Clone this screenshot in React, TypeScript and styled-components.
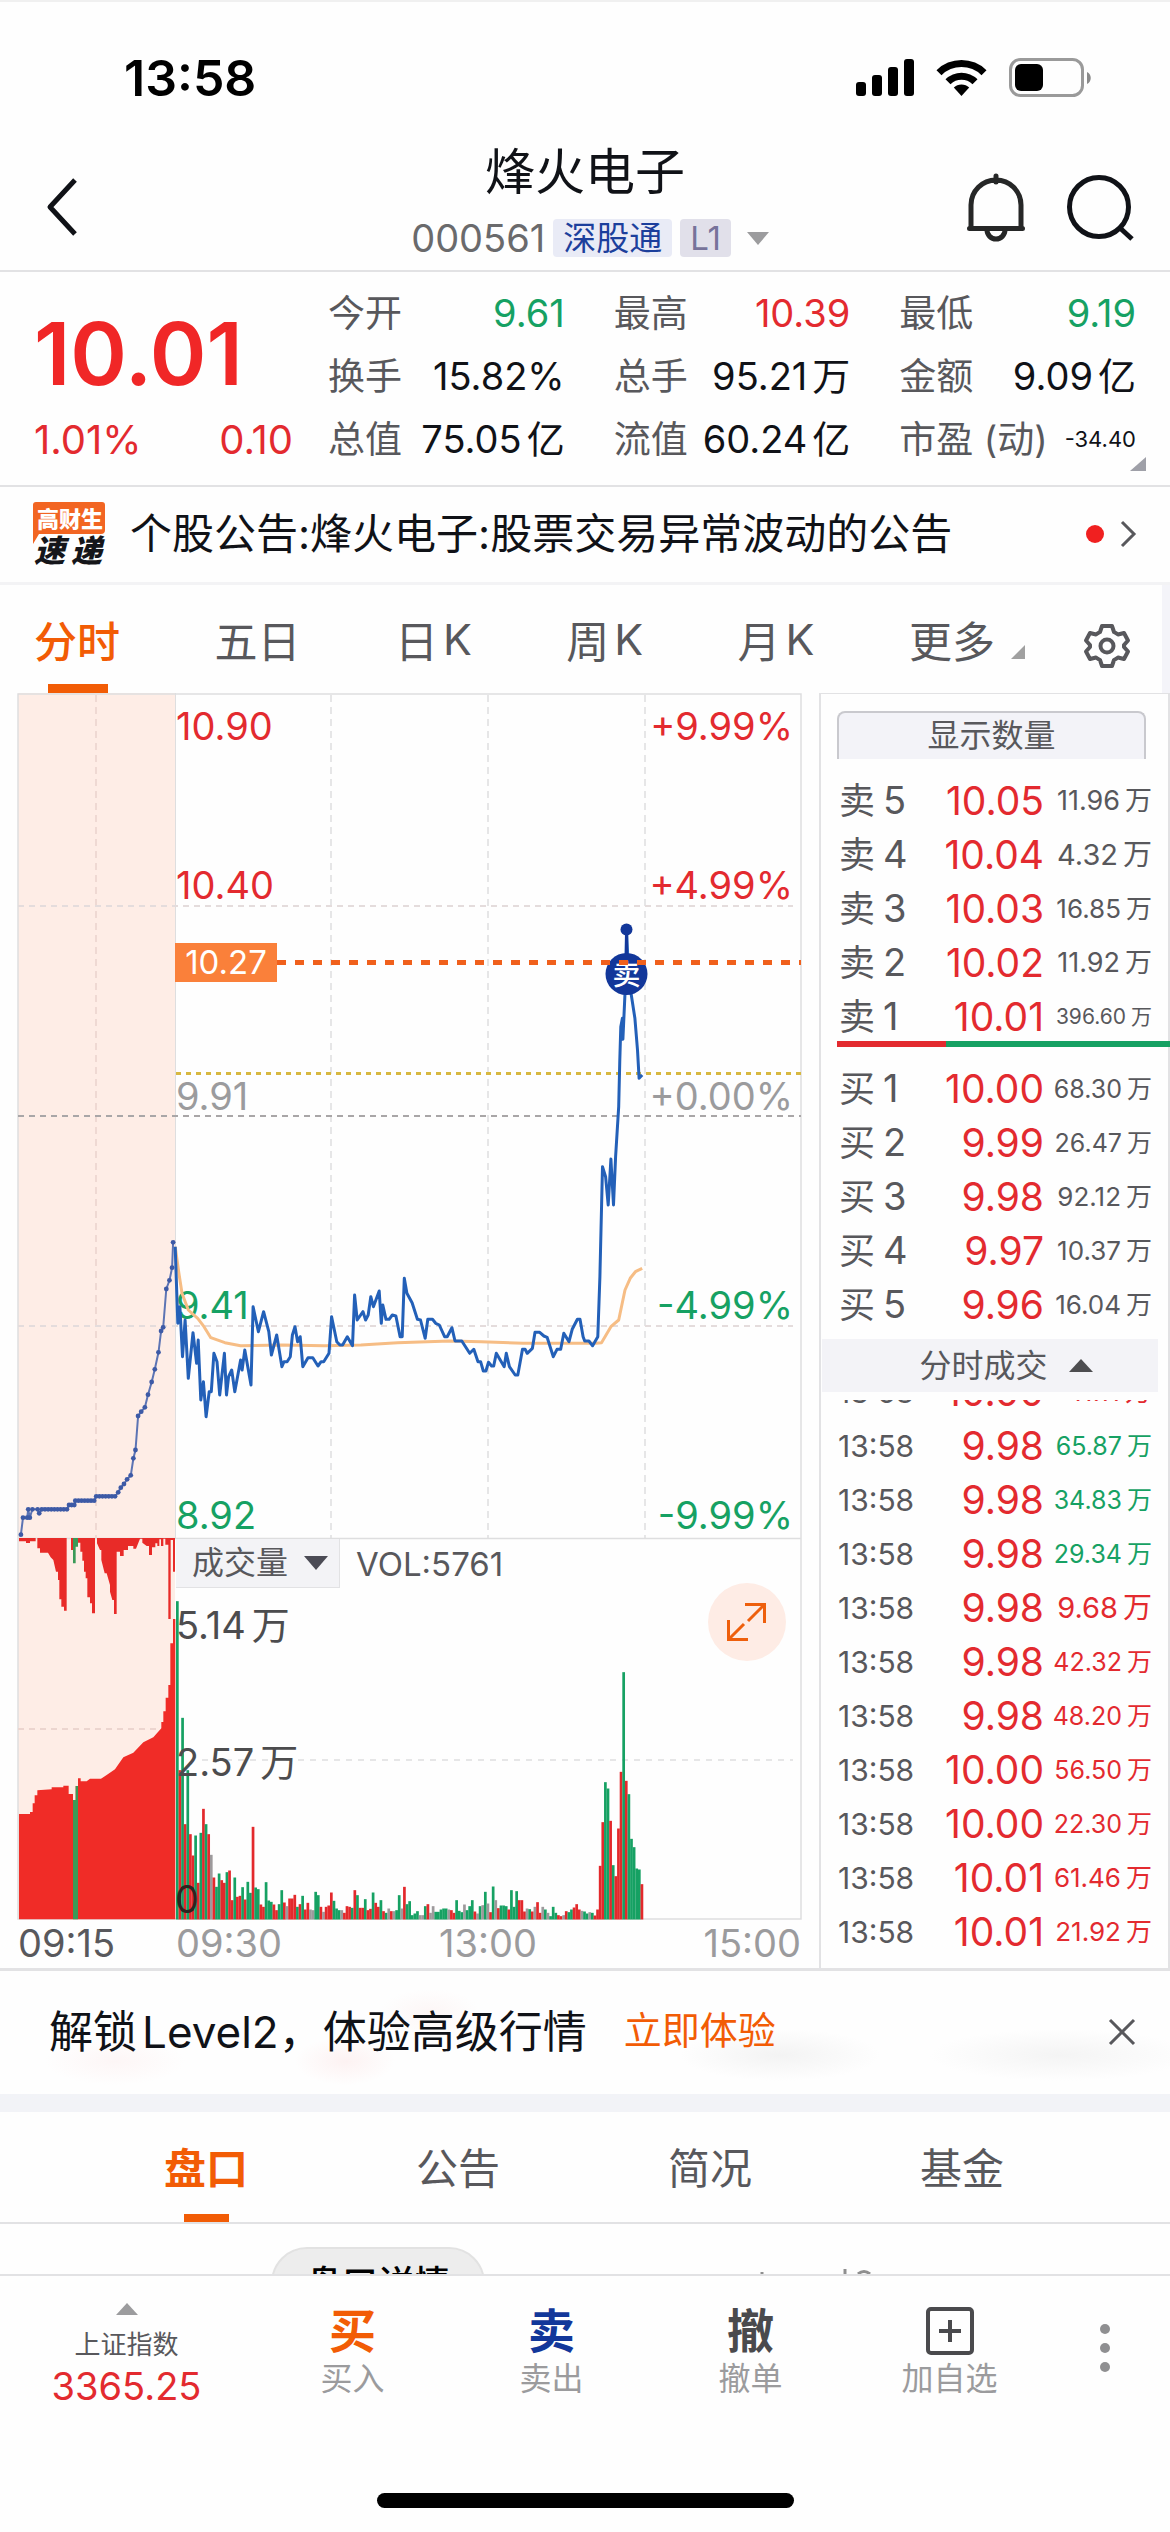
import React from "react";
import styled, { createGlobalStyle, css } from "styled-components";

const RED = "#e32a2f";
const GREEN = "#16a163";
const ORANGE = "#f25c05";
const GRAY = "#58585c";
const LIGHT = "#9b9b9d";
const INK = "#101217";
const LINE = "#e2e2e4";
const BLUE = "#2360b8";
const NAVY = "#12379a";

const Global = createGlobalStyle`
  *, *::before, *::after { box-sizing: border-box; }
  body { margin: 0; background: #fff; }
  button { font: inherit; color: inherit; background: none; border: 0; padding: 0; margin: 0; cursor: pointer; }
  svg { display: block; overflow: visible; }
`;

const Page = styled.div`
  min-height: 100vh;
  display: flex;
  flex-direction: column;
  background: #fefefe;
  border-top: 2px solid #f0f0f0;
  color: ${INK};
  font-family: Inter, "Noto Sans CJK SC", sans-serif;
  font-size: 38px;
  overflow: hidden;
`;

/* ---------- status bar and title ---------- */

const StatusBar = styled.div`
  display: flex;
  justify-content: space-between;
  align-items: center;
  padding: 46px 78px 0 124px;
`;

const Clock = styled.time`
  font-size: 50px;
  line-height: 60px;
  font-weight: 600;
  color: #000;
`;

const TitleBar = styled.header`
  display: grid;
  grid-template-columns: 1fr auto 1fr;
  align-items: center;
  padding: 36px 37px 0;
  border-bottom: 2px solid ${LINE};
`;

const TitleBlock = styled.div`
  display: flex;
  flex-direction: column;
  align-items: center;
  padding-bottom: 12px;
`;

const StockName = styled.h1`
  margin: 0;
  font-size: 50px;
  line-height: 56px;
  font-weight: 400;
`;

const CodeRow = styled.div`
  display: flex;
  align-items: center;
  gap: 8px;
  margin-top: 18px;
  padding-left: 10px;
  line-height: 40px;
  color: #6a6a6c;
  font-size: 38px;
`;

const CodeArrow = styled.span`
  margin-left: 8px;
`;

const Tag = styled.span<{ $tone: "blue" | "violet" }>`
  font-size: 33px;
  line-height: 38px;
  padding: 0 10px;
  border-radius: 4px;
  ${(p) =>
    p.$tone === "blue"
      ? css`color: #1c3f9c; background: #e9ebf6;`
      : css`color: #77739a; background: #e1e0ea;`}
`;

const BackButton = styled.button`
  justify-self: start;
  padding-left: 9px;
`;

const HeaderActions = styled.div`
  display: flex;
  justify-content: flex-end;
  align-items: center;
  gap: 42px;
`;

/* ---------- quote summary ---------- */

const Quote = styled.section`
  position: relative;
  display: grid;
  grid-template-columns: 259px 1fr;
  column-gap: 35px;
  padding: 10px 34px 14px;
  border-bottom: 2px solid ${LINE};
`;

const PriceBlock = styled.div`
  padding-top: 18px;
  color: ${RED};
`;

const Price = styled.div`
  font-size: 86px;
  line-height: 108px;
  font-weight: 600;
  color: #f02727;
`;

const Change = styled.div`
  display: flex;
  justify-content: space-between;
  font-size: 40px;
  line-height: 63px;
`;

const Stats = styled.dl`
  margin: 0;
  display: grid;
  grid-template-columns: repeat(3, 1fr);
  column-gap: 49px;
`;

const Stat = styled.div`
  display: flex;
  justify-content: space-between;
  line-height: 63px;
  white-space: nowrap;
`;

const StatLabel = styled.dt`
  font-size: 37px;
  color: ${GRAY};
`;

const StatValue = styled.dd<{ $color?: string; $small?: boolean }>`
  margin: 0;
  font-size: ${(p) => (p.$small ? 22 : 38)}px;
  color: ${(p) => p.$color ?? INK};
`;

const Unit = styled.span`
  margin-left: 5px;
`;

const Corner = styled.svg`
  position: absolute;
  right: 24px;
  bottom: 14px;
`;

/* ---------- announcement ---------- */

const Notice = styled.a`
  display: flex;
  align-items: center;
  padding: 15px 34px 16px 33px;
  border-bottom: 3px solid #f3f3f5;
  color: inherit;
  text-decoration: none;
`;

const NoticeText = styled.span`
  flex: 1;
  margin-left: 25px;
  font-size: 42px;
  line-height: 64px;
  white-space: nowrap;
`;

const Dot = styled.i`
  width: 18px;
  height: 18px;
  margin-right: 16px;
  border-radius: 50%;
  background: #f02020;
`;

/* ---------- period tabs ---------- */

const Periods = styled.nav`
  display: flex;
  justify-content: space-between;
  align-items: stretch;
  height: 108px;
  padding: 0 33px 0 34px;
  border-right: 8px solid #f4f4f9;
  color: ${GRAY};
  font-size: 43px;
`;

const Period = styled.button<{ $active?: boolean }>`
  position: relative;
  display: flex;
  align-items: center;
  white-space: nowrap;
  ${(p) =>
    p.$active &&
    css`
      color: ${ORANGE};
      font-weight: 500;
      &::after {
        content: "";
        position: absolute;
        bottom: 0;
        left: 14px;
        width: 60px;
        height: 9px;
        background: ${ORANGE};
      }
    `}
`;

const MoreGroup = styled.div`
  display: flex;
  align-items: center;
  gap: 60px;
`;

const MoreMark = styled.svg`
  margin: 26px 0 0 16px;
`;

const SettingsButton = styled.button`
  padding-top: 14px;
`;

/* ---------- market area ---------- */

const Market = styled.main`
  display: grid;
  grid-template-columns: 819fr 351fr;
  border-bottom: 3px solid ${LINE};
`;

const ChartPane = styled.section`
  position: relative;
`;

const ChartSvg = styled.svg`
  width: 100%;
  height: auto;
  font-family: Inter, "Noto Sans CJK SC", sans-serif;
`;

const IndicatorBar = styled.div`
  position: absolute;
  left: 176px;
  top: 846px;
  display: flex;
  align-items: center;
  gap: 16px;
  font-size: 33px;
  line-height: 48px;
  color: ${GRAY};
`;

const IndicatorButton = styled.button`
  display: flex;
  align-items: center;
  gap: 16px;
  padding: 0 11px 0 16px;
  background: #f3f3f6;
  border: solid ${LINE};
  border-width: 0 1px 1px 0;
  font-size: 32px;
  line-height: 48px;
`;

const ExpandButton = styled.button`
  position: absolute;
  left: 708px;
  top: 890px;
  width: 78px;
  height: 78px;
  display: grid;
  place-items: center;
  border-radius: 50%;
  background: #feece5;
`;

const BookPane = styled.aside`
  display: flex;
  flex-direction: column;
  border: solid ${LINE};
  border-width: 1px 2px 0 2px;
  padding: 17px 0 9px;
`;

const ShowAmount = styled.button`
  margin: 0 22px 15px 16px;
  height: 48px;
  border: solid #c9c9ce;
  border-width: 2px 2px 0;
  border-radius: 8px 8px 0 0;
  background: #f3f3f8;
  color: ${GRAY};
  font-size: 32px;
  line-height: 46px;
`;

const Rows = styled.table`
  width: 100%;
  table-layout: fixed;
  border-collapse: collapse;
`;

const Row = styled.tr`
  height: 54px;
  line-height: 54px;
  white-space: nowrap;
`;

const Level = styled.th`
  width: 96px;
  padding: 0 0 0 18px;
  text-align: left;
  font-weight: 400;
  font-size: 36px;
  color: ${GRAY};
  vertical-align: middle;
`;

const LevelNumber = styled.span`
  margin-left: 8px;
  font-size: 38px;
  line-height: 1;
`;

const TickTime = styled(Level)`
  padding-left: 17px;
  font-size: 30px;
`;

const Cell = styled.td<{ $size: number; $color: string; $end?: boolean }>`
  width: ${(p) => (p.$end ? "auto" : "127px")};
  padding: 0 ${(p) => (p.$end ? 16 : 0)}px 0 0;
  text-align: right;
  font-size: ${(p) => p.$size}px;
  color: ${(p) => p.$color};
  vertical-align: middle;
`;

const Balance = styled.div`
  display: flex;
  height: 6px;
  margin: -3px -2px 15px 16px;
`;

const BalancePart = styled.span<{ $share: number; $color: string }>`
  flex: ${(p) => p.$share};
  background: ${(p) => p.$color};
`;

const TicksHead = styled.button`
  display: flex;
  justify-content: center;
  align-items: center;
  gap: 21px;
  margin: 7px 10px 8px 1px;
  padding-left: 32px;
  background: #f3f3f7;
  color: ${GRAY};
  font-size: 32px;
  line-height: 53px;
`;

const TicksWindow = styled.div`
  height: 559px;
  display: flex;
  flex-direction: column;
  justify-content: flex-end;
  overflow: hidden;
`;

/* ---------- promo, section tabs, peek ---------- */

const Promo = styled.section`
  display: flex;
  align-items: center;
  gap: 37px;
  padding: 28px 34px 29px 49px;
  border-bottom: 18px solid #f2f3f7;
  background: radial-gradient(ellipse 70px 24px at 115px 90px, #fdf6f6, transparent),
    radial-gradient(ellipse 50px 24px at 345px 90px, #fdf2f2, transparent),
    radial-gradient(ellipse 50px 24px at 430px 42px, #fdf6f6, transparent),
    radial-gradient(ellipse 100px 26px at 780px 84px, #f3f3f3, transparent),
    radial-gradient(ellipse 130px 26px at 1060px 84px, #f4f4f4, transparent);
`;

const PromoText = styled.p`
  margin: 0;
  font-size: 44px;
  line-height: 66px;
  white-space: nowrap;
`;

const PromoLink = styled.a`
  flex: 1;
  color: ${ORANGE};
  font-size: 38px;
  line-height: 62px;
  padding-bottom: 4px;
  text-decoration: none;
`;

const Sections = styled.nav`
  display: grid;
  grid-template-columns: repeat(4, 1fr);
  padding: 0 82px 0 80px;
  border-bottom: 2px solid ${LINE};
`;

const SectionTab = styled.button<{ $active?: boolean }>`
  position: relative;
  padding-top: 4px;
  font-size: 42px;
  line-height: 106px;
  color: ${(p) => (p.$active ? ORANGE : GRAY)};
  font-weight: ${(p) => (p.$active ? 700 : 400)};
  &::after {
    content: "";
    display: ${(p) => (p.$active ? "block" : "none")};
    position: absolute;
    bottom: 0;
    left: 50%;
    margin-left: -22px;
    width: 45px;
    height: 8px;
    background: ${ORANGE};
  }
`;

const Peek = styled.section`
  height: 50px;
  padding: 23px 0 0 271px;
  display: flex;
  align-items: flex-start;
  overflow: hidden;
`;

const Pill = styled.button`
  padding: 10px 33px;
  border-radius: 36px;
  border: 2px solid #e2e2e2;
  background: #ededed;
  color: #000;
  font-size: 36px;
  line-height: 50px;
  font-weight: 500;
  white-space: nowrap;
`;

const PeekMarks = styled.svg`
  margin: 22px 0 0 274px;
`;

/* ---------- bottom toolbar ---------- */

const BottomBar = styled.footer`
  flex: 1;
  display: flex;
  flex-direction: column;
  justify-content: space-between;
  align-items: center;
  border-top: 2px solid ${LINE};
  padding: 27px 0 24px;
`;

const Toolbar = styled.div`
  width: 100%;
  display: grid;
  grid-template-columns: 253fr repeat(4, 199fr) 112fr;
  padding-right: 9px;
`;

const IndexButton = styled.button`
  display: flex;
  flex-direction: column;
  align-items: center;
  font-size: 26px;
  line-height: 38px;
  color: ${GRAY};
`;

const IndexName = styled.span`
  margin-top: 11px;
`;

const IndexValue = styled.span`
  font-size: 38px;
  line-height: 44px;
  color: ${RED};
`;

const Tool = styled.button`
  display: flex;
  flex-direction: column;
  align-items: center;
  font-size: 32px;
  line-height: 40px;
  color: ${LIGHT};
`;

const ToolGlyph = styled.span<{ $color: string }>`
  height: 56px;
  display: flex;
  align-items: center;
  font-size: 47px;
  line-height: 56px;
  font-weight: 700;
  color: ${(p) => p.$color};
`;

const MenuButton = styled.button`
  display: grid;
  justify-items: center;
  align-content: start;
  padding-top: 20px;
`;

const HomeBar = styled.div`
  width: 417px;
  height: 15px;
  border-radius: 8px;
  background: #000;
`;

/* ---------- data ---------- */

type StatItem = { label: string; value: string; color?: string; small?: boolean };

const stats: StatItem[] = [
  { label: "今开", value: "9.61", color: GREEN },
  { label: "最高", value: "10.39", color: RED },
  { label: "最低", value: "9.19", color: GREEN },
  { label: "换手", value: "15.82%" },
  { label: "总手", value: "95.21万" },
  { label: "金额", value: "9.09亿" },
  { label: "总值", value: "75.05亿" },
  { label: "流值", value: "60.24亿" },
  { label: "市盈 (动)", value: "-34.40", small: true },
];

const asks = [
  ["卖5", "10.05", "11.96万"],
  ["卖4", "10.04", "4.32万"],
  ["卖3", "10.03", "16.85万"],
  ["卖2", "10.02", "11.92万"],
  ["卖1", "10.01", "396.60万"],
];

const bids = [
  ["买1", "10.00", "68.30万"],
  ["买2", "9.99", "26.47万"],
  ["买3", "9.98", "92.12万"],
  ["买4", "9.97", "10.37万"],
  ["买5", "9.96", "16.04万"],
];

const ticks: [string, string, string][] = [
  ["10.00", "11.11万", RED],
  ["9.98", "65.87万", GREEN],
  ["9.98", "34.83万", GREEN],
  ["9.98", "29.34万", GREEN],
  ["9.98", "9.68万", RED],
  ["9.98", "42.32万", RED],
  ["9.98", "48.20万", RED],
  ["10.00", "56.50万", RED],
  ["10.00", "22.30万", RED],
  ["10.01", "61.46万", RED],
  ["10.01", "21.92万", RED],
];

// Longer amounts step down in size so that the column keeps its width; narrow ones give some of it back.
const amountSize = (amount: string) => {
  if (amount.length > 6) return 21;
  if (amount.length < 6) return 29;
  return 25 + Math.min(2, amount.split("1").length - 1);
};

// Volume per minute: colour letter (r up, g down, n flat) and height in thirds of a pixel.
const volume = `g955 r448 g605 r286 g448 r256 r192 g252 r110 g260 r332 g286 r256 n194 r126 g98 g138 r118 r110 g142
r147 r58 g126 r68 r71 g97 r60 g113 g80 r278 g96 g91 r45 r38 g112 g57 g53 r45 r28 g46
g88 r51 n40 r63 r63 r74 g38 r46 g71 r30 r50 n30 n28 g83 g73 r38 n23 r38 r42 r81
g56 g33 g28 n28 r20 r40 r38 g35 r88 g73 r35 r35 g61 r28 r32 g81 r50 r38 g58 r25
g20 n33 r25 n25 g28 g73 n33 r98 g46 g55 g13 g18 g25 n13 n13 g40 r46 n20 n40 g23
g23 g30 g33 g33 n30 r28 r20 g58 g26 g22 n45 g28 g40 g58 r24 n18 g40 n43 g83 n48
r22 g99 n58 r34 g42 g42 g40 r30 g88 g38 g85 r58 r58 r24 n33 g31 r24 n38 r52 r20
n38 g30 n20 g10 g38 g20 r13 r10 n13 r25 g22 g30 r36 r46 r30 n26 g24 g18 n22 g20
r12 r30 r161 r292 g412 g393 r296 g163 r130 r273 r443 g742 r416 g376 g242 g217 g153 g150 r106`
  .split(/\s+/)
  .map((entry) => ({ tone: entry[0], h: Number(entry.slice(1)) / 3 }));

const volumeTone: Record<string, string> = { r: "#e3292c", g: "#16a163", n: "#9d9a9c" };

// Traces are kept on a finer grid than the drawing: one x step is 0.523px, one y step a third of a pixel.
const tx = (x: number) => x * 0.523;
const ty = (y: number) => 367 + y / 3;
const parse = (s: string) =>
  s
    .trim()
    .split(/\s+/)
    .map((p) => p.split(",").map(Number))
    .map(([x, y]) => [tx(x), ty(y)] as [number, number]);
const toPoints = (list: [number, number][]) =>
  list.map(([x, y]) => `${x.toFixed(1)},${y.toFixed(1)}`).join(" ");

const auction = parse(`40,1424 44,1373 52,1373 54,1348 57,1373 62,1348 72,1348 75,1360 80,1348 86,1348 92,1348 98,1348
104,1348 110,1348 116,1348 122,1348 128,1348 132,1335 137,1335 142,1335 144,1322 150,1322 156,1322 162,1322 168,1322 174,1322
180,1322 184,1309 190,1309 196,1309 202,1309 208,1309 214,1309 220,1309 226,1297 231,1283 237,1272 243,1258 250,1246
255,1195 259,1170 264,1068 270,1055 277,1042 283,1004 290,966 296,928 303,877 308,813 312,802 318,687 324,661 329,623 331,547`);

const price = parse(`335,560 340,790 344,740 349,890 354,780 360,955 369,818 376,910 379,840 384,1020 389,965 394,1070
400,995 404,995 409,880 415,905 420,1005 429,880 433,1005 437,950 443,930 449,995 460,900 463,930 468,870 480,975 484,740
494,815 504,755 514,815 519,885 529,825 539,920 543,905 549,905 555,890 559,825 564,800 569,845 574,830 579,920 589,893
598,893 608,918 614,905 619,905 629,880 634,770 644,845 650,855 655,855 664,830 674,857 678,705 683,780 694,755 699,780
704,765 709,710 714,740 725,693 729,790 732,735 738,778 744,778 750,765 757,768 765,830 769,830 773,655 778,700 788,728
798,778 804,780 813,835 818,778 827,778 833,790 840,795 850,830 855,830 864,803 870,843 883,843 898,880 906,868 914,905
919,905 924,933 929,933 934,907 940,918 944,918 949,880 964,920 968,880 974,920 985,945 990,945 999,868 1004,868 1008,880
1018,865 1023,817 1032,817 1040,828 1046,832 1058,890 1065,868 1072,868 1078,820 1088,845 1094,808 1104,778 1109,778
1115,830 1118,843 1126,843 1133,857 1143,830 1147,650 1152,320 1158,350 1163,435 1168,297 1173,435 1177,290 1183,140
1185,0 1187,-100 1190,-125 1191,-62 1195,-200 1198,-392 1202,-250 1207,-195 1214,-125 1219,-30 1222,55 1228,45`);

const average = parse(`335,560 342,640 348,700 360,750 378,775 390,800 403,833 430,848 460,857 540,855 620,857 690,855
760,848 860,843 920,845 1000,850 1140,850 1150,848 1168,800 1183,780 1195,690 1205,655 1215,635 1228,625`);

// Call-auction volume silhouettes, in thirds of a pixel from the top of the volume band.
const auctionVolume =
  "M57 912H90V906H98V880H104V856H112V841L155 838V832H190V827H206V852H219V870H227V828H234V805H242V814H260L270 806H303L320 795 345 778 370 742 400 728 430 697 460 682 484 655V636H490V604H497V563H505V525H511V400H519V327H526V1228H57Z";
const auctionUnmatched =
  "M57 84V94H78V99H90V94H107V84H112V115H120V128H144L152 142 160 150 168 185H174V210H178V268H184V290H192V302H200V84H213V120H219V84H234V98H241V125H247V152H252V185H257V205H262V262H270V280H276V310H285V84H291V100L300 120H304V150L314 190H320L330 225V245L337 270H342V312H350V125H360V138H371V120H384V108H400V116H408L420 86H427V98L440 108H447V135H456V112H466V100H472V108H478V88H483V108H490V86H496V104H505V327H512V90H519V185H525V84Z";

/* ---------- pieces ---------- */

const WithUnit = ({ text }: { text: string }) => {
  const last = text.slice(-1);
  if (last !== "万" && last !== "亿") return <>{text}</>;
  return (
    <>
      {text.slice(0, -1)}
      <Unit>{last}</Unit>
    </>
  );
};

const Triangle = ({ up, w, h, color }: { up?: boolean; w: number; h: number; color: string }) => (
  <svg width={w} height={h} viewBox={`0 0 ${w} ${h}`} aria-hidden="true">
    <path d={up ? `M0 ${h}L${w / 2} 0L${w} ${h}Z` : `M0 0H${w}L${w / 2} ${h}Z`} fill={color} />
  </svg>
);

const StatusIcons = () => (
  <svg width="236" height="40" viewBox="0 0 236 40" aria-hidden="true">
    <rect x="0" y="24" width="10" height="14" rx="3" />
    <rect x="16" y="17" width="10" height="21" rx="3" />
    <rect x="32" y="9" width="10" height="29" rx="3" />
    <rect x="48" y="1" width="10" height="37" rx="3" />
    <path d="M80.500 12.200A35.500 35.500 0 0 1 130.500 12.200L125.500 17.200A28.400 28.400 0 0 0 85.500 17.200Z" />
    <path d="M89.500 21.200A23 23 0 0 1 121.500 21.200L116.500 26.200A16 16 0 0 0 94.500 26.200Z" />
    <path d="M97.800 29.600A11 11 0 0 1 113.200 29.600L105.500 38Z" />
    <rect x="154.500" y="1.500" width="72" height="36" rx="10" fill="none" stroke="#9a9a9a" strokeWidth="3" />
    <rect x="159" y="6" width="28" height="27" rx="6" />
    <path d="M231 14C236 16 236 24 231 26Z" fill="#8a8a8a" />
  </svg>
);

const Bell = () => (
  <svg width="58" height="68" viewBox="0 0 58 68" fill="none" stroke="#262727" strokeWidth="5" strokeLinecap="round" aria-hidden="true">
    <path d="M4 55.500V32A25 25 0 0 1 54 32V55.500M2.500 55.500H55.500M29 3V9" />
    <path d="M20 57A9 9 0 0 0 38 57" />
  </svg>
);

const SearchIcon = () => (
  <svg width="66" height="66" viewBox="0 0 66 66" fill="none" stroke={INK} strokeWidth="5" aria-hidden="true">
    <circle cx="32" cy="33" r="29.500" />
    <path d="M53 54L65 65" />
  </svg>
);

const Gear = () => (
  <svg width="44" height="46" viewBox="0 0 44 46" fill="none" stroke={GRAY} strokeWidth="4" strokeLinejoin="round" aria-hidden="true">
    <path d="M17 3H27L29 9Q31 10 33 11.500L39 10 43 17.500 39 22V24L43 28.500 39 36 33 34.500Q31 36 29 37L27 43H17L15 37Q13 36 11 34.500L5 36 1 28.500 5 24V22L1 17.500 5 10 11 11.500Q13 10 15 9Z" />
    <circle cx="22" cy="23" r="6.500" />
  </svg>
);

const NewsLogo = () => (
  <svg width="72" height="64" viewBox="0 0 72 64" fontFamily='"Noto Sans CJK SC", sans-serif' aria-hidden="true">
    <path d="M3 0H69Q72 0 72 3V28Q72 32 68 32H6L0 42V3Q0 0 3 0Z" fill="#f26522" />
    <text x="4" y="25" fontSize="22" fontWeight="900" fill="#fff">高财生</text>
    <text x="1" y="60" fontSize="31" fontWeight="900" fontStyle="italic" fill="#15161a">速</text>
    <text x="38" y="60" fontSize="31" fontWeight="900" fontStyle="italic" fill="#15161a">递</text>
  </svg>
);

const axisLabels = [
  { y: 33, price: "10.90", pct: "+9.99%", color: RED },
  { y: 192, price: "10.40", pct: "+4.99%", color: RED },
  { y: 403, price: "9.91", pct: "+0.00%", color: LIGHT },
  { y: 612, price: "9.41", pct: "-4.99%", color: GREEN },
  { y: 822, price: "8.92", pct: "-9.99%", color: GREEN },
];

const Chart = () => (
  <ChartSvg viewBox="0 0 819 1275" role="img" aria-label="分时走势">
    <rect x="18" y="0" width="157" height="1226" fill="#feede6" />
    <g stroke="#dededf" strokeWidth="2" fill="none">
      <path d="M18 1H801V1226H18Z" strokeWidth="1.500" />
      <path d="M18 845.500H801" strokeWidth="1.500" />
      <path d="M175.500 0V845" strokeWidth="1" />
      <path d="M331 2V845M488 2V845M645 2V845" strokeDasharray="7 5" strokeWidth="1.500" />
      <path d="M96 2V845" stroke="#efd9d3" strokeDasharray="7 5" />
      <path d="M18 213H793M18 633H793" stroke="#e4dcdc" strokeDasharray="6 5" />
      <path d="M18 1036H175" stroke="#ecd5cf" strokeDasharray="6 5" />
      <path d="M202 1067H793" strokeDasharray="6 6" strokeWidth="1.500" />
      <path d="M18 423H801" stroke="#a9a6a7" strokeDasharray="6 5" />
    </g>
    <path d="M176 380.500H801" stroke="#d8b840" strokeWidth="3" strokeDasharray="5 5" />

    <g transform="translate(0 817) scale(0.33333)">
      <path d={auctionUnmatched} fill="#e82b28" />
      <path d={auctionVolume} fill="#f02c27" />
      <path d="M219 84H234V110H227V160H219ZM219 870H227V828H234V1228H219Z" fill="#3a9a57" />
    </g>
    <g>
      {volume.map((bar, i) => (
        <rect key={i} x={176 + i * 2.61} y={1226.5 - bar.h} width="2.7" height={bar.h} fill={volumeTone[bar.tone]} />
      ))}
    </g>

    <g fontSize="38">
      {axisLabels.map((a) => (
        <React.Fragment key={a.price}>
          <text x="176" y={a.y + 14} fill={a.color}>{a.price}</text>
          <text x="793" y={a.y + 14} fill={a.color} textAnchor="end">{a.pct}</text>
        </React.Fragment>
      ))}
      <text x="176" y="946" fill="#4c4c4e">5.14<tspan dx="6">万</tspan></text>
      <text x="176" y="1083" fill="#4c4c4e">2.57<tspan dx="6">万</tspan></text>
      <text x="175" y="1220" fill="#2e2420">0</text>
      <text x="18" y="1264" fill={GRAY}>09:15</text>
      <text x="176" y="1264" fill={LIGHT}>09:30</text>
      <text x="488" y="1264" fill={LIGHT} textAnchor="middle">13:00</text>
      <text x="801" y="1264" fill={LIGHT} textAnchor="end">15:00</text>
    </g>

    <polyline points={toPoints(average)} fill="none" stroke="#f6bd85" strokeWidth="3" strokeLinejoin="round" />
    <polyline points={toPoints(auction)} fill="none" stroke="#5c74b4" strokeWidth="2" />
    {auction.map(([x, y], i) => (
      <circle key={i} cx={x} cy={y} r="2.4" fill="#3d5aa6" />
    ))}
    <polyline points={toPoints(price)} fill="none" stroke={BLUE} strokeWidth="3" strokeLinejoin="round" />

    <path d="M626.500 236V281" stroke={NAVY} strokeWidth="3" />
    <circle cx="626.500" cy="236.500" r="6" fill={NAVY} />
    <circle cx="626.500" cy="281" r="21" fill={NAVY} />
    <text x="626.500" y="292" fontSize="28" fontWeight="500" fill="#fff" textAnchor="middle">卖</text>
    <path d="M277 269.500H801" stroke="#f0601c" strokeWidth="5" strokeDasharray="9 9" />
    <rect x="175" y="250" width="102" height="39" fill="#fa803a" />
    <text x="226" y="281" fontSize="33" fill="#fff" textAnchor="middle">10.27</text>
  </ChartSvg>
);

const BookRows = ({ rows, label }: { rows: string[][]; label: string }) => (
  <Rows aria-label={label}>
    <tbody>
      {rows.map(([level, value, amount]) => (
        <Row key={level}>
          <Level scope="row">
            {level[0]}
            <LevelNumber>{level[1]}</LevelNumber>
          </Level>
          <Cell $size={39} $color={RED}>{value}</Cell>
          <Cell $size={amountSize(amount)} $color={GRAY} $end>
            <WithUnit text={amount} />
          </Cell>
        </Row>
      ))}
    </tbody>
  </Rows>
);

export default function App() {
  return (
    <>
      <Global />
      <Page>
        <StatusBar>
          <Clock>13:58</Clock>
          <StatusIcons />
        </StatusBar>

        <TitleBar>
          <BackButton aria-label="返回">
            <svg width="32" height="58" viewBox="0 0 32 58" fill="none" stroke={INK} strokeWidth="5" strokeLinejoin="round">
              <path d="M29 2L4 29L29 56" />
            </svg>
          </BackButton>
          <TitleBlock>
            <StockName>烽火电子</StockName>
            <CodeRow>
              <span>000561</span>
              <Tag $tone="blue">深股通</Tag>
              <Tag $tone="violet">L1</Tag>
              <CodeArrow><Triangle w={22} h={13} color="#9c9c9e" /></CodeArrow>
            </CodeRow>
          </TitleBlock>
          <HeaderActions>
            <button aria-label="提醒"><Bell /></button>
            <button aria-label="搜索"><SearchIcon /></button>
          </HeaderActions>
        </TitleBar>

        <Quote>
          <PriceBlock>
            <Price>10.01</Price>
            <Change>
              <span>1.01%</span>
              <span>0.10</span>
            </Change>
          </PriceBlock>
          <Stats>
            {stats.map((s) => (
              <Stat key={s.label}>
                <StatLabel>{s.label}</StatLabel>
                <StatValue $color={s.color} $small={s.small}>
                  <WithUnit text={s.value} />
                </StatValue>
              </Stat>
            ))}
          </Stats>
          <Corner width="16" height="14" viewBox="0 0 16 14" aria-hidden="true">
            <path d="M16 0V14H0Z" fill="#9fa0a8" />
          </Corner>
        </Quote>

        <Notice href="#notice">
          <NewsLogo />
          <NoticeText>个股公告:烽火电子:股票交易异常波动的公告</NoticeText>
          <Dot />
          <svg width="16" height="28" viewBox="0 0 16 28" fill="none" stroke={GRAY} strokeWidth="3" aria-hidden="true">
            <path d="M2 2L14 14L2 26" />
          </svg>
        </Notice>

        <Periods>
          <Period $active>分时</Period>
          <Period>五日</Period>
          <Period>日<Unit>K</Unit></Period>
          <Period>周<Unit>K</Unit></Period>
          <Period>月<Unit>K</Unit></Period>
          <MoreGroup>
            <Period>
              更多
              <MoreMark width="14" height="14" viewBox="0 0 14 14" aria-hidden="true">
                <path d="M14 0V14H0Z" fill="#a0a0a0" />
              </MoreMark>
            </Period>
            <SettingsButton aria-label="设置"><Gear /></SettingsButton>
          </MoreGroup>
        </Periods>

        <Market>
          <ChartPane>
            <Chart />
            <IndicatorBar>
              <IndicatorButton>
                成交量
                <Triangle w={24} h={14} color="#4b4b55" />
              </IndicatorButton>
              <span>VOL:5761</span>
            </IndicatorBar>
            <ExpandButton aria-label="全屏">
              <svg width="42" height="42" viewBox="0 0 42 42" fill="none" stroke="#ee5f0c" strokeWidth="3">
                <path d="M19 3.500H38.500V22M38.500 3.500L22 20M2.500 19V38.500H22M2.500 38.500L18 23" />
              </svg>
            </ExpandButton>
          </ChartPane>

          <BookPane>
            <ShowAmount>显示数量</ShowAmount>
            <BookRows rows={asks} label="卖盘" />
            <Balance>
              <BalancePart $share={109} $color={RED} />
              <BalancePart $share={223} $color={GREEN} />
            </Balance>
            <BookRows rows={bids} label="买盘" />
            <TicksHead>
              分时成交
              <Triangle up w={24} h={13} color="#4d4d50" />
            </TicksHead>
            <TicksWindow>
              <Rows aria-label="分时成交">
                <tbody>
                  {ticks.map(([value, amount, color], i) => (
                    <Row key={i}>
                      <TickTime scope="row">13:58</TickTime>
                      <Cell $size={39} $color={RED}>{value}</Cell>
                      <Cell $size={amountSize(amount)} $color={color} $end>
                        <WithUnit text={amount} />
                      </Cell>
                    </Row>
                  ))}
                </tbody>
              </Rows>
            </TicksWindow>
          </BookPane>
        </Market>

        <Promo>
          <PromoText>解锁<Unit>Level2，体验高级行情</Unit></PromoText>
          <PromoLink href="#level2">立即体验</PromoLink>
          <button aria-label="关闭">
            <svg width="28" height="28" viewBox="0 0 28 28" stroke={GRAY} strokeWidth="3">
              <path d="M2 2L26 26M26 2L2 26" />
            </svg>
          </button>
        </Promo>

        <Sections>
          <SectionTab $active>盘口</SectionTab>
          <SectionTab>公告</SectionTab>
          <SectionTab>简况</SectionTab>
          <SectionTab>基金</SectionTab>
        </Sections>

        <Peek>
          <Pill>盘口详情</Pill>
          <PeekMarks width="110" height="6" viewBox="0 0 110 6" stroke="#8f8f8f" strokeWidth="3" fill="none" aria-hidden="true">
            <path d="M3 3V6M86 0V6M99 5Q105 0 111 5" />
          </PeekMarks>
        </Peek>

        <BottomBar>
          <Toolbar>
            <IndexButton>
              <Triangle up w={22} h={12} color="#9c9c9e" />
              <IndexName>上证指数</IndexName>
              <IndexValue>3365.25</IndexValue>
            </IndexButton>
            <Tool><ToolGlyph $color={ORANGE}>买</ToolGlyph>买入</Tool>
            <Tool><ToolGlyph $color={NAVY}>卖</ToolGlyph>卖出</Tool>
            <Tool><ToolGlyph $color="#4a4a4d">撤</ToolGlyph>撤单</Tool>
            <Tool>
              <ToolGlyph $color="#4a4a4d">
                <svg width="48" height="48" viewBox="0 0 48 48" fill="none" stroke="currentColor" strokeWidth="4" aria-hidden="true">
                  <rect x="2" y="2" width="44" height="44" rx="3" />
                  <path d="M24 13V35M13 24H35" />
                </svg>
              </ToolGlyph>
              加自选
            </Tool>
            <MenuButton aria-label="更多操作">
              <svg width="10" height="50" viewBox="0 0 10 50" fill="#8f8f91">
                <circle cx="5" cy="6" r="5" />
                <circle cx="5" cy="25" r="5" />
                <circle cx="5" cy="44" r="5" />
              </svg>
            </MenuButton>
          </Toolbar>
          <HomeBar />
        </BottomBar>
      </Page>
    </>
  );
}
